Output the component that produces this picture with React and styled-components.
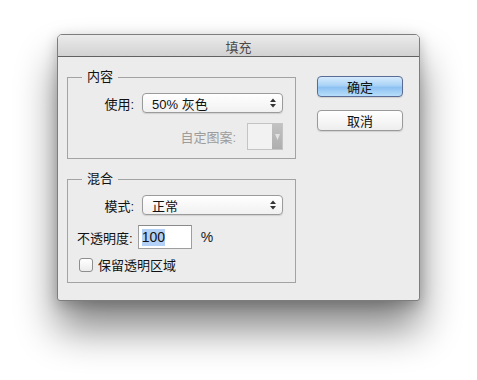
import React from "react";
import styled, { createGlobalStyle } from "styled-components";

const GlobalStyle = createGlobalStyle`
  html, body {
    margin: 0;
    background: #ffffff;
  }
  body {
    font-family: "Liberation Sans", "Noto Sans CJK SC", sans-serif;
    font-size: 13px;
    color: #1a1a1a;
  }
`;

const Page = styled.div`
  width: 477px;
  height: 380px;
  padding: 34px 0 0 57px;
  box-sizing: border-box;
`;

const Dialog = styled.div`
  width: 363px;
  height: 267px;
  box-sizing: border-box;
  background: #ececec;
  border: 1px solid #7d7d7d;
  border-radius: 5px 5px 3px 3px;
  box-shadow: 0 28px 40px rgba(0, 0, 0, 0.48), 0 4px 14px rgba(0, 0, 0, 0.22);
  display: flex;
  flex-direction: column;
  overflow: hidden;
`;

const TitleBar = styled.div`
  height: 22px;
  flex: none;
  background: linear-gradient(#ebebeb, #d2d2d2);
  border-bottom: 1px solid #616161;
  display: flex;
  align-items: center;
  justify-content: center;
  color: #4a4a4a;
  font-size: 13px;
  padding-top: 1px;
  box-sizing: border-box;
`;

const Body = styled.div`
  display: flex;
  padding: 12px 16px 0 9px;
  gap: 21px;
`;

const Left = styled.div`
  width: 229px;
  display: flex;
  flex-direction: column;
  gap: 12px;
`;

const Group = styled.fieldset`
  margin: 0;
  padding: 0;
  border: 1px solid #a3a3a3;
  border-radius: 0;
  min-width: 0;
`;

const Legend = styled.legend`
  margin-left: 14px;
  padding: 0 5px;
  line-height: 16px;
  font-size: 13px;
  color: #111;
`;

const GroupInner = styled.div`
  display: flex;
  flex-direction: column;
  padding: ${(p) => p.$pad};
`;

const Row = styled.div`
  display: flex;
  align-items: center;
  justify-content: ${(p) => (p.$end ? "flex-end" : "flex-start")};
  margin-top: ${(p) => p.$mt || 0}px;
  padding-left: ${(p) => p.$pl || 0}px;
`;

const Label = styled.span`
  color: ${(p) => (p.$disabled ? "#9c9c9c" : "#111")};
  margin-right: ${(p) => p.$gap}px;
  white-space: nowrap;
`;

const Select = styled.div`
  width: 141px;
  height: 20px;
  box-sizing: border-box;
  border: 1px solid #9b9b9b;
  border-radius: 4px;
  background: linear-gradient(#ffffff, #f1f1f1);
  box-shadow: 0 1px 1px rgba(0, 0, 0, 0.12);
  display: flex;
  align-items: center;
  justify-content: space-between;
  padding: 0 6px 0 9px;
  color: #111;
`;

const PatternBox = styled.div`
  width: 36px;
  height: 27px;
  box-sizing: border-box;
  border: 1px solid #c4c4c4;
  background: #f2f2f2;
  display: flex;
  justify-content: flex-end;
`;

const PatternArrow = styled.div`
  width: 10px;
  background: linear-gradient(#c2c2c2, #aeaeae);
  display: flex;
  align-items: center;
  justify-content: center;
`;

const TextInput = styled.div`
  width: 54px;
  height: 24px;
  box-sizing: border-box;
  border: 1px solid #9e9e9e;
  border-top-color: #8a8a8a;
  background: #fff;
  display: flex;
  align-items: center;
  padding-left: 3px;
  margin-left: 5px;
  font-size: 14px;
`;

const Selected = styled.span`
  background: #b3d1f7;
  color: #111;
  line-height: 17px;
`;

const Percent = styled.span`
  margin-left: 9px;
  font-size: 14px;
`;

const Checkbox = styled.span`
  width: 12px;
  height: 12px;
  border: 1px solid #8e8e8e;
  border-radius: 3px;
  background: linear-gradient(#ffffff, #ececec);
  margin-right: 5px;
  flex: none;
`;

const Right = styled.div`
  display: flex;
  flex-direction: column;
  gap: 13px;
  padding-top: 7px;
`;

const Button = styled.div`
  width: 86px;
  height: 21px;
  box-sizing: border-box;
  border-radius: 4px;
  display: flex;
  align-items: center;
  justify-content: center;
  font-size: 13px;
  color: #111;
  border: 1px solid ${(p) => (p.$primary ? "#5a6c95" : "#9a9a9a")};
  background: ${(p) =>
    p.$primary
      ? "linear-gradient(#d6ebfc 0%, #a9d2f6 45%, #8cc1f1 55%, #b8defb 100%)"
      : "linear-gradient(#ffffff, #eeeeee)"};
  box-shadow: 0 1px 1px rgba(0, 0, 0, 0.12);
`;

const Updown = () => (
  <svg width="6" height="10" viewBox="0 0 6 10">
    <path d="M3 0.5 L6 4 L0 4 Z" fill="#333" />
    <path d="M0 6 L6 6 L3 9.5 Z" fill="#333" />
  </svg>
);

const Down = () => (
  <svg width="5" height="6" viewBox="0 0 5 6">
    <path d="M0 0 L5 0 L2.5 6 Z" fill="#e2e2e2" />
  </svg>
);

export default function App() {
  return (
    <Page>
      <GlobalStyle />
      <Dialog>
        <TitleBar>填充</TitleBar>
        <Body>
          <Left>
            <Group>
              <Legend>内容</Legend>
              <GroupInner $pad="8px 12px 8px 0">
                <Row $end>
                  <Label $gap={8}>使用:</Label>
                  <Select>
                    <span>50% 灰色</span>
                    <Updown />
                  </Select>
                </Row>
                <Row $end $mt={10}>
                  <Label $gap={11} $disabled>
                    自定图案:
                  </Label>
                  <PatternBox>
                    <PatternArrow>
                      <Down />
                    </PatternArrow>
                  </PatternBox>
                </Row>
              </GroupInner>
            </Group>
            <Group>
              <Legend>混合</Legend>
              <GroupInner $pad="8px 12px 8px 0">
                <Row $end>
                  <Label $gap={8}>模式:</Label>
                  <Select>
                    <span>正常</span>
                    <Updown />
                  </Select>
                </Row>
                <Row $mt={10} $pl={9}>
                  <Label $gap={0}>不透明度:</Label>
                  <TextInput>
                    <Selected>100</Selected>
                  </TextInput>
                  <Percent>%</Percent>
                </Row>
                <Row $mt={6} $pl={11}>
                  <Checkbox />
                  <Label $gap={0}>保留透明区域</Label>
                </Row>
              </GroupInner>
            </Group>
          </Left>
          <Right>
            <Button $primary>确定</Button>
            <Button>取消</Button>
          </Right>
        </Body>
      </Dialog>
    </Page>
  );
}
